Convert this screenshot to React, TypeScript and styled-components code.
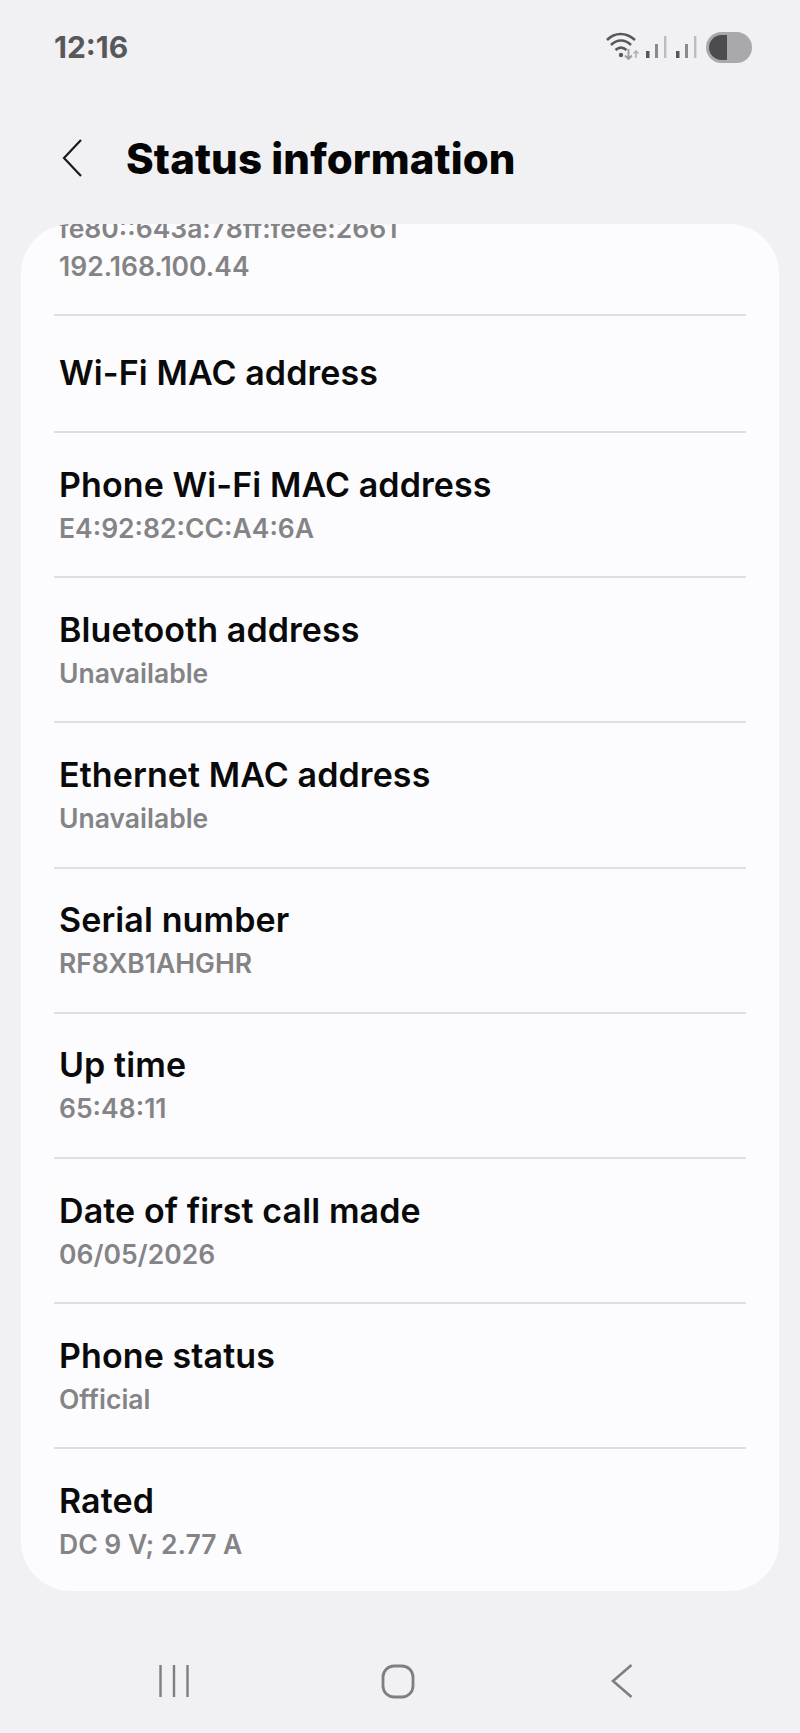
import { createGlobalStyle } from 'styled-components'
import styled from 'styled-components'

const GlobalStyle = createGlobalStyle`
  html, body {
    margin: 0;
    padding: 0;
    background: #f1f1f3;
  }
  * {
    box-sizing: border-box;
  }
`

const Page = styled.div`
  width: 800px;
  height: 1733px;
  display: flex;
  flex-direction: column;
  background: #f1f1f3;
  font-family: Inter, 'Liberation Sans', sans-serif;
  overflow: hidden;
`

const StatusBar = styled.div`
  height: 94px;
  padding: 0 48px 0 54px;
  display: flex;
  align-items: center;
  justify-content: space-between;
`

const Clock = styled.span`
  font-size: 30px;
  font-weight: 700;
  color: #58585a;
`

const StatusIcons = styled.div`
  display: flex;
  align-items: center;
  gap: 6px;
`

const Header = styled.div`
  height: 130px;
  padding: 0 0 2px 62px;
  display: flex;
  align-items: center;
  gap: 44px;
`

const PageTitle = styled.h1`
  margin: 0;
  font-size: 42px;
  font-weight: 800;
  color: #050505;
  letter-spacing: 0.1px;
`

const Card = styled.div`
  margin: 0 21px;
  height: 1367px;
  background: #fcfcfe;
  border-radius: 50px;
  overflow: hidden;
  padding: 0 33px;
`

const ScrolledRow = styled.div`
  height: 103px;
  margin-top: -13px;
  padding-left: 5px;
  display: flex;
  flex-direction: column;
  gap: 4px;
`

const Row = styled.div<{ $single?: boolean }>`
  height: ${(p) => (p.$single ? '117px' : '145.2px')};
  border-top: 2px solid #dfdfe1;
  padding: ${(p) => (p.$single ? '0 5px 2px' : '1px 5px 0')};
  display: flex;
  flex-direction: column;
  justify-content: center;
  gap: 7px;
`

const RowTitle = styled.div`
  font-size: 34px;
  font-weight: 600;
  line-height: 38px;
  color: #0a0a0a;
  letter-spacing: 0.1px;
`

const RowValue = styled.div`
  font-size: 26.5px;
  font-weight: 600;
  line-height: 34px;
  color: #848486;
`

const NavBar = styled.div`
  flex: 1;
  display: flex;
  align-items: center;
  justify-content: center;
  padding: 38px 4px 0 0;
`

const NavSlot = styled.div`
  width: 224px;
  display: flex;
  justify-content: center;
`

const rows = [
  { title: 'Phone Wi-Fi MAC address', value: 'E4:92:82:CC:A4:6A' },
  { title: 'Bluetooth address', value: 'Unavailable' },
  { title: 'Ethernet MAC address', value: 'Unavailable' },
  { title: 'Serial number', value: 'RF8XB1AHGHR' },
  { title: 'Up time', value: '65:48:11' },
  { title: 'Date of first call made', value: '06/05/2026' },
  { title: 'Phone status', value: 'Official' },
  { title: 'Rated', value: 'DC 9 V; 2.77 A' },
]

const WifiIcon = () => (
  <svg width="34" height="30" viewBox="0 0 34 30" fill="none">
    <path d="M1 8 C9 0 20 0 29 8" stroke="#58585a" strokeWidth="2.6" />
    <path d="M5 13 C11 7 19 7 25 13" stroke="#58585a" strokeWidth="2.6" />
    <path d="M9.5 18 C13 15 17 15 20.5 18" stroke="#58585a" strokeWidth="2.6" />
    <circle cx="15" cy="23" r="2.2" fill="#58585a" />
    <path d="M22.5 17 V27 M19 23.5 L22.5 27 L26 23.5" stroke="#9c9c9e" strokeWidth="1.9" />
    <path d="M30 26 V19 M27.5 21.5 L30 19 L32.5 21.5" stroke="#b4b4b6" strokeWidth="1.7" />
  </svg>
)

const SignalIcon = () => (
  <svg width="24" height="22" viewBox="0 0 24 22" fill="none">
    <rect x="0" y="15" width="3.5" height="7" fill="#58585a" />
    <rect x="9" y="8" width="3" height="14" fill="#8a8a8c" />
    <rect x="18" y="0" width="2.4" height="22" fill="#bcbcbe" />
  </svg>
)

const ToggleIcon = () => (
  <svg width="46" height="31" viewBox="0 0 46 31">
    <rect x="0" y="0" width="46" height="31" rx="15.5" fill="#a9a9ab" />
    <path d="M21 3 H15.5 A12.5 12.5 0 0 0 15.5 28 H21 Z" fill="#4c4c4e" />
  </svg>
)

const BackIcon = () => (
  <svg width="20" height="38" viewBox="0 0 20 38" fill="none">
    <path d="M19 1 L2 19 L19 37" stroke="#1a1a1a" strokeWidth="2.2" />
  </svg>
)

const RecentsIcon = () => (
  <svg width="30" height="32" viewBox="0 0 30 32" fill="none">
    <path d="M1.5 0 V32 M15 0 V32 M28.5 0 V32" stroke="#7f7f81" strokeWidth="2.4" />
  </svg>
)

const HomeIcon = () => (
  <svg width="34" height="35" viewBox="0 0 34 35" fill="none">
    <rect x="2" y="2" width="30" height="31" rx="11" stroke="#7f7f81" strokeWidth="2.8" />
  </svg>
)

const NavBackIcon = () => (
  <svg width="22" height="34" viewBox="0 0 22 34" fill="none">
    <path d="M20.5 1 L2 17 L20.5 33" stroke="#7f7f81" strokeWidth="2.6" />
  </svg>
)

export default function App() {
  return (
    <Page>
      <GlobalStyle />
      <StatusBar>
        <Clock>12:16</Clock>
        <StatusIcons>
          <WifiIcon />
          <SignalIcon />
          <SignalIcon />
          <ToggleIcon />
        </StatusIcons>
      </StatusBar>
      <Header>
        <BackIcon />
        <PageTitle>Status information</PageTitle>
      </Header>
      <Card>
        <ScrolledRow>
          <RowValue>fe80::643a:78ff:feee:2661</RowValue>
          <RowValue>192.168.100.44</RowValue>
        </ScrolledRow>
        <Row $single>
          <RowTitle>Wi-Fi MAC address</RowTitle>
        </Row>
        {rows.map((row) => (
          <Row key={row.title}>
            <RowTitle>{row.title}</RowTitle>
            <RowValue>{row.value}</RowValue>
          </Row>
        ))}
      </Card>
      <NavBar>
        <NavSlot>
          <RecentsIcon />
        </NavSlot>
        <NavSlot>
          <HomeIcon />
        </NavSlot>
        <NavSlot>
          <NavBackIcon />
        </NavSlot>
      </NavBar>
    </Page>
  )
}
